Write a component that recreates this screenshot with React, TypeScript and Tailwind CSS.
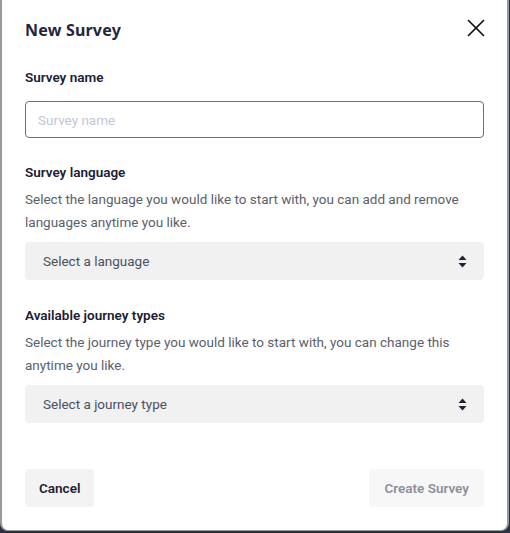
import { X } from 'lucide-react';

function SelectBox({ placeholder }: { placeholder: string }) {
  return (
    <div className="flex h-[38px] items-center justify-between rounded-[4px] bg-[#f1f1f1] pl-[18px] pr-[17px]">
      <span className="text-[13.5px] text-[#4b505c]">{placeholder}</span>
      <svg width="9" height="13" viewBox="0 0 9 13" fill="#1f2433">
        <path d="M4.5 0.5 L8.5 5 H0.5 Z" />
        <path d="M4.5 12.5 L8.5 8 H0.5 Z" />
      </svg>
    </div>
  );
}

function Field({
  label,
  description,
  placeholder,
}: {
  label: string;
  description: string;
  placeholder: string;
}) {
  return (
    <div className="flex flex-col">
      <div className="text-[13.5px] font-semibold leading-[18px] text-[#1b2033]">{label}</div>
      <p className="mt-[6.5px] text-[13.5px] leading-[23px] text-[#5b606c]">{description}</p>
      <div className="mt-[8.5px]">
        <SelectBox placeholder={placeholder} />
      </div>
    </div>
  );
}

export default function App() {
  return (
    <div className="h-[533px] w-[510px] bg-[#2a3140] font-['Roboto',sans-serif]">
      <div className="flex h-[531px] w-[509px] flex-col rounded-b-[8px] border-x-2 border-b border-[#9a9a9a] bg-white px-[23px]">
        <div className="flex h-[24px] items-center justify-between mt-[18px]">
          <h2 className="font-['Noto_Sans',sans-serif] text-[16px] font-bold tracking-[0.2px] text-[#1f2640]">
            New Survey
          </h2>
          <button type="button" className="relative -top-[2.5px] -mr-[7px] -my-[3px] text-[#111]">
            <X size={30} strokeWidth={1.35} />
          </button>
        </div>

        <div className="mt-[26px] text-[13.5px] font-semibold leading-[18px] text-[#1b2033]">
          Survey name
        </div>
        <input
          placeholder="Survey name"
          className="mt-[15px] h-[37px] w-full shrink-0 rounded-[4px] border border-[#6b6f78] px-[12px] text-[13.5px] text-[#1b2033] outline-none placeholder:text-[#c3c6d6]"
        />

        <div className="mt-[25px]">
          <Field
            label="Survey language"
            description="Select the language you would like to start with, you can add and remove languages anytime you like."
            placeholder="Select a language"
          />
        </div>

        <div className="mt-[26px]">
          <Field
            label="Available journey types"
            description="Select the journey type you would like to start with, you can change this anytime you like."
            placeholder="Select a journey type"
          />
        </div>

        <div className="mt-auto mb-[23px] flex items-center justify-between">
          <button
            type="button"
            className="h-[38px] rounded-[4px] bg-[#f3f3f3] px-[14px] text-[13.5px] font-semibold text-[#1b2033]"
          >
            Cancel
          </button>
          <button
            type="button"
            className="h-[38px] rounded-[4px] bg-[#f7f7f7] px-[15px] text-[13.5px] font-semibold text-[#8c909c]"
          >
            Create Survey
          </button>
        </div>
      </div>
    </div>
  );
}
